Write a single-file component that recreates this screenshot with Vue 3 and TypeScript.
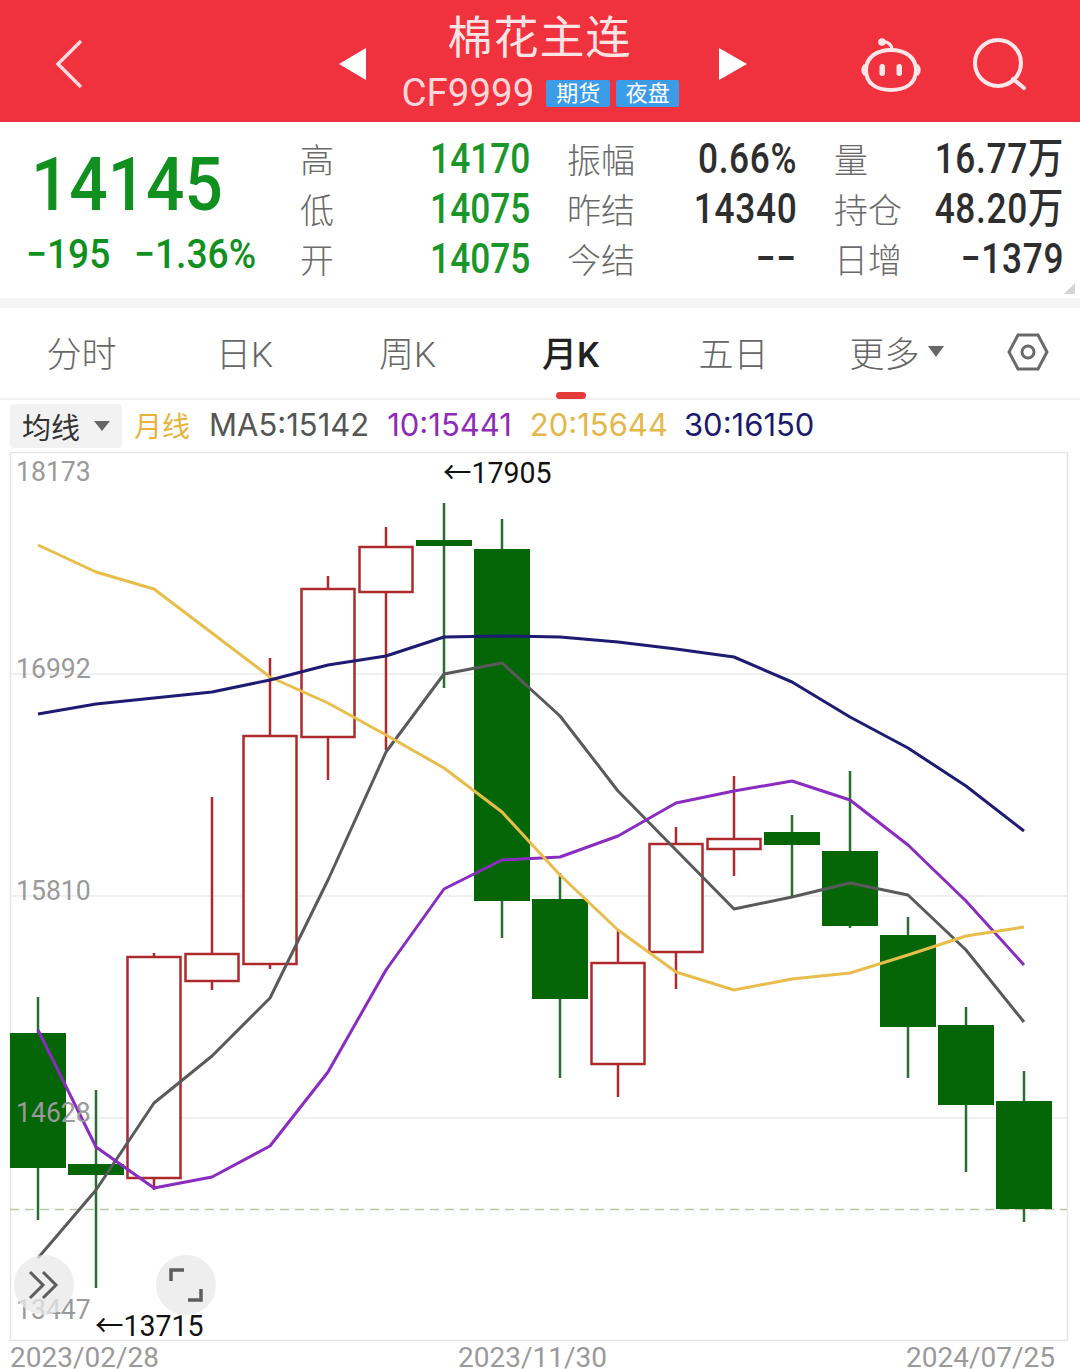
<script setup lang="ts">
interface Candle {
  top: number;
  bottom: number;
  open: number;
  close: number;
  up: boolean;
}

// one entry per month, in chart pixels, x runs in steps of 58
const candles: Candle[] = [
  { top: 997, bottom: 1220, open: 1033, close: 1168, up: false },
  { top: 1090, bottom: 1288, open: 1164, close: 1175, up: false },
  { top: 953, bottom: 1190, open: 957, close: 1178, up: true },
  { top: 797, bottom: 990, open: 954, close: 981, up: true },
  { top: 658, bottom: 969, open: 736, close: 964, up: true },
  { top: 576, bottom: 780, open: 589, close: 737, up: true },
  { top: 527, bottom: 750, open: 547, close: 592, up: true },
  { top: 503, bottom: 688, open: 540, close: 546, up: false },
  { top: 519, bottom: 938, open: 549, close: 901, up: false },
  { top: 873, bottom: 1078, open: 899, close: 999, up: false },
  { top: 930, bottom: 1097, open: 963, close: 1064, up: true },
  { top: 827, bottom: 989, open: 844, close: 952, up: true },
  { top: 776, bottom: 876, open: 839, close: 849, up: true },
  { top: 815, bottom: 896, open: 832, close: 845, up: false },
  { top: 771, bottom: 928, open: 851, close: 926, up: false },
  { top: 917, bottom: 1078, open: 935, close: 1027, up: false },
  { top: 1007, bottom: 1172, open: 1025, close: 1105, up: false },
  { top: 1071, bottom: 1222, open: 1101, close: 1209, up: false },
];

const centerX = (i: number) => 38 + i * 58;

const series = (ys: number[]) => ys.map((y, i) => `${centerX(i)},${y}`).join(" ");

const maLines = [
  {
    color: "#5a5a5a",
    points: series([1258, 1190, 1103, 1056, 998, 880, 752, 674, 663, 716, 791, 850, 909, 897, 883, 895, 950, 1022]),
  },
  {
    color: "#8a2cc0",
    points: series([1030, 1147, 1188, 1177, 1146, 1072, 970, 889, 860, 857, 836, 803, 791, 781, 800, 845, 901, 965]),
  },
  {
    color: "#e9bd4c",
    points: series([545, 572, 589, 633, 677, 703, 735, 768, 812, 875, 930, 972, 990, 979, 973, 955, 936, 927]),
  },
  {
    color: "#1d1b72",
    points: series([714, 704, 698, 692, 680, 665, 656, 637, 636, 637, 642, 649, 657, 682, 717, 748, 786, 831]),
  },
];

const quotes = [
  { label: "高", value: "14170", tone: "green" },
  { label: "振幅", value: "0.66%", tone: "dark" },
  { label: "量", value: "16.77万", tone: "dark" },
  { label: "低", value: "14075", tone: "green" },
  { label: "昨结", value: "14340", tone: "dark" },
  { label: "持仓", value: "48.20万", tone: "dark" },
  { label: "开", value: "14075", tone: "green" },
  { label: "今结", value: "−−", tone: "dark" },
  { label: "日增", value: "−1379", tone: "dark" },
];

const tabs = ["分时", "日K", "周K", "月K", "五日"];

const axisLabels = [
  { text: "18173", y: 4 },
  { text: "16992", y: 201 },
  { text: "15810", y: 423 },
  { text: "14628", y: 645 },
  { text: "13447", y: 842 },
];
</script>

<template>
  <div class="page">
    <header class="topbar">
      <div class="topbar-left">
        <svg width="30" height="52" viewBox="0 0 30 52">
          <path d="M26 3 3 26l23 23" fill="none" stroke="#ffd9dc" stroke-width="3.5" />
        </svg>
      </div>
      <div class="topbar-center">
        <span class="arrow arrow-prev"></span>
        <div class="title-block">
          <div class="title">棉花主连</div>
          <div class="subtitle">
            <span class="code">CF9999</span>
            <span class="tag">期货</span>
            <span class="tag">夜盘</span>
          </div>
        </div>
        <span class="arrow arrow-next"></span>
      </div>
      <div class="topbar-right">
        <svg width="60" height="56" viewBox="0 0 60 56" fill="none" stroke="#ffe6e8" stroke-width="4">
          <path d="M5 32c0-13 11-20 25-20s25 7 25 20c0 14-11 20-25 20S5 46 5 32Z" />
          <path d="M4 27c-3 3-3 7 0 10M56 27c3 3 3 7 0 10" stroke-width="3" />
          <path d="M21 4c6-1 10 3 10 8" stroke-width="3" />
          <circle cx="21" cy="4" r="3.8" fill="#ffe6e8" stroke="none" />
          <rect x="18.5" y="26" width="5.5" height="12" rx="2.7" fill="#ffe6e8" stroke="none" />
          <rect x="35.5" y="26" width="5.5" height="12" rx="2.7" fill="#ffe6e8" stroke="none" />
        </svg>
        <svg width="54" height="56" viewBox="0 0 54 56" fill="none" stroke="#ffe6e8" stroke-width="4">
          <circle cx="26" cy="25" r="23" />
          <path d="m41 41 11 9" stroke-linecap="round" />
        </svg>
      </div>
    </header>

    <section class="quote">
      <div class="price-block">
        <div class="price"><span>14145</span></div>
        <div class="change"><span>−195</span><span>−1.36%</span></div>
      </div>
      <div class="quote-grid">
        <div v-for="q in quotes" :key="q.label" class="quote-cell">
          <span class="quote-label">{{ q.label }}</span>
          <span class="quote-value" :class="q.tone">{{ q.value }}</span>
        </div>
      </div>
      <span class="corner"></span>
    </section>

    <nav class="tabs">
      <div v-for="tab in tabs" :key="tab" class="tab" :class="{ active: tab === '月K' }">{{ tab }}</div>
      <div class="tab">更多<span class="more-caret"></span></div>
      <div class="tab">
        <svg class="hex" width="42" height="38" viewBox="0 0 42 38" fill="none" stroke="#6a6a6a" stroke-width="3">
          <path d="M11 2h20l9 17-9 17H11L2 19Z" />
          <circle cx="21" cy="19" r="6" />
        </svg>
      </div>
    </nav>

    <div class="ma-row">
      <div class="ma-select">均线<span class="ma-caret"></span></div>
      <span class="ma-period">月线</span>
      <span class="ma-gray">MA5:15142</span>
      <span class="ma-purple">10:15441</span>
      <span class="ma-yellow">20:15644</span>
      <span class="ma-navy">30:16150</span>
    </div>

    <div class="chart">
      <svg class="chart-svg" width="1080" height="889" viewBox="0 452 1080 889">
        <rect x="10.5" y="452.5" width="1057" height="888" fill="none" stroke="#e6e6e6" stroke-width="1.5" />
        <path d="M10 674h1057M10 896h1057M10 1118h1057" stroke="#ececec" stroke-width="1.5" />
        <path d="M10 1209.5h1057" stroke="#b9c9a8" stroke-width="1.5" stroke-dasharray="9 6" />
        <g v-for="(c, i) in candles" :key="i">
          <line
            :x1="centerX(i)"
            :x2="centerX(i)"
            :y1="c.top"
            :y2="c.bottom"
            :stroke="c.up ? '#ac2a2c' : '#24702c'"
            stroke-width="2.5"
          />
          <rect
            v-if="c.up"
            :x="centerX(i) - 26.5"
            :y="c.open"
            width="53"
            :height="c.close - c.open"
            fill="#fff"
            stroke="#ac2a2c"
            stroke-width="2.5"
          />
          <rect
            v-else
            :x="centerX(i) - 28"
            :y="c.open"
            width="56"
            :height="c.close - c.open"
            fill="#056607"
          />
        </g>
        <polyline
          v-for="line in maLines"
          :key="line.color"
          :points="line.points"
          fill="none"
          :stroke="line.color"
          stroke-width="3"
          stroke-linejoin="round"
        />
      </svg>
      <span v-for="a in axisLabels" :key="a.text" class="axis-label" :style="{ top: a.y + 'px' }">{{ a.text }}</span>
      <span class="extreme extreme-high">←17905</span>
      <span class="extreme extreme-low">←13715</span>
      <div class="round-btn round-btn-left">
        <svg width="32" height="30" viewBox="0 0 32 30" fill="none" stroke="#5d5d5d" stroke-width="3">
          <path d="m2 2 13 13L2 28M15 2l13 13-13 13" />
        </svg>
      </div>
      <div class="round-btn round-btn-right">
        <svg width="34" height="34" viewBox="0 0 34 34" fill="none" stroke="#5d5d5d" stroke-width="3.5">
          <path d="M2 13V2h13M32 21v11H19" />
        </svg>
      </div>
    </div>

    <footer class="dates">
      <span>2023/02/28</span>
      <span>2023/11/30</span>
      <span>2024/07/25</span>
    </footer>
  </div>
</template>

<style scoped>
.page {
  width: 1080px;
  height: 1369px;
  overflow: hidden;
  background: #fff;
  font-family: Roboto, "Noto Sans CJK SC", sans-serif;
}

.topbar {
  height: 122px;
  background: #ef323d;
  display: grid;
  grid-template-columns: 1fr auto 1fr;
  align-items: center;
}
.topbar-left {
  padding: 6px 0 0 55px;
  display: flex;
}
.topbar-right {
  align-self: start;
  display: flex;
  justify-content: flex-end;
  gap: 51px;
  padding: 38px 54px 0 0;
}
.topbar-center {
  display: flex;
  align-items: center;
  gap: 34px;
}
.arrow {
  width: 0;
  height: 0;
  border-top: 16px solid transparent;
  border-bottom: 16px solid transparent;
  margin-top: 6px;
}
.arrow-prev {
  border-right: 27px solid #fff;
  margin-left: 5px;
}
.arrow-next {
  border-left: 28px solid #fff;
  margin-left: 5px;
}
.title-block {
  width: 280px;
  text-align: center;
}
.title {
  font-size: 45px;
  line-height: 54px;
  color: #ffe3e5;
  margin-top: 5px;
  letter-spacing: 1px;
}
.subtitle {
  display: flex;
  align-items: center;
  gap: 6px;
  height: 46px;
  margin-top: 4px;
}
.code {
  font-size: 38.5px;
  color: #ffd6d9;
  margin-right: 6px;
  margin-left: 2px;
}
.tag {
  width: 65px;
  height: 27px;
  line-height: 27px;
  font-size: 22px;
  color: #fff;
  background: #3d9ce8;
  text-align: center;
  border-radius: 2px;
  margin-top: 2px;
}

.quote {
  position: relative;
  height: 176px;
  display: flex;
  border-bottom: 10px solid #f5f5f5;
}
.price-block {
  width: 300px;
  flex: none;
}
.price {
  font-size: 75px;
  font-weight: 500;
  line-height: 80px;
  color: #10901e;
  margin-top: 22px;
  padding-left: 31px;
}
.price span {
  display: inline-block;
  transform: scaleX(0.9);
  transform-origin: left;
}
.change {
  display: flex;
  gap: 26px;
  margin-top: 9px;
  padding-left: 26px;
  font-size: 40px;
  font-weight: 500;
  line-height: 44px;
  color: #10901e;
}
.change span {
  display: inline-block;
  width: 82px;
  transform: scaleX(0.93);
  transform-origin: left;
  white-space: nowrap;
}
.quote-grid {
  flex: 1;
  padding: 11px 17px 0 0;
  display: grid;
  grid-template-columns: repeat(3, 230px);
  grid-auto-rows: 50px;
  column-gap: 37px;
}
.quote-cell {
  display: flex;
  justify-content: space-between;
  align-items: center;
}
.quote-label {
  font-size: 34px;
  color: #6a6a6a;
  font-weight: 300;
}
.quote-value {
  font-size: 42px;
  line-height: 50px;
  margin-top: 2px;
  font-weight: 500;
  transform: scaleX(0.84);
  transform-origin: right;
  white-space: nowrap;
}
.green {
  color: #1a962a;
}
.dark {
  color: #2e2e2e;
  letter-spacing: 0.8px;
}
.corner {
  position: absolute;
  right: 5px;
  bottom: 4px;
  width: 0;
  height: 0;
  border-left: 11px solid transparent;
  border-bottom: 11px solid #d4d4d4;
}

.tabs {
  height: 90px;
  display: grid;
  grid-template-columns: repeat(6, 163px) 1fr;
  border-bottom: 2px solid #f0f0f0;
}
.tab {
  position: relative;
  display: flex;
  align-items: center;
  justify-content: center;
  padding-bottom: 3px;
  font-size: 35px;
  font-weight: 300;
  color: #666;
}
.tab.active {
  color: #222;
  font-weight: 500;
}
.tab.active::after {
  content: "";
  position: absolute;
  left: 67px;
  bottom: -1px;
  width: 30px;
  height: 7px;
  border-radius: 4px;
  background: #e53a3a;
}
.more-caret {
  width: 0;
  height: 0;
  margin-left: 8px;
  border-left: 8px solid transparent;
  border-right: 8px solid transparent;
  border-top: 11px solid #666;
}
.hex {
  margin-right: 2px;
}

.ma-row {
  height: 52px;
  display: flex;
  align-items: center;
  padding-left: 10px;
  font-family: Inter, "Noto Sans CJK SC", sans-serif;
  font-size: 31px;
  white-space: nowrap;
}
.ma-row > span {
  margin-bottom: 3px;
}
.ma-select {
  width: 112px;
  height: 44px;
  background: #f2f2f2;
  border-radius: 4px;
  display: flex;
  align-items: center;
  padding-left: 12px;
  box-sizing: border-box;
  font-size: 29px;
  color: #333;
  margin-right: 12px;
}
.ma-caret {
  width: 0;
  height: 0;
  margin-left: 14px;
  border-left: 8px solid transparent;
  border-right: 8px solid transparent;
  border-top: 10px solid #666;
}
.ma-period {
  color: #e8b23c;
  font-size: 28px;
  margin-right: 19px;
}
.ma-gray {
  color: #555;
  margin-right: 18px;
}
.ma-purple {
  color: #8e2bb8;
  margin-right: 18px;
}
.ma-yellow {
  color: #e3b84a;
  margin-right: 16px;
}
.ma-navy {
  color: #1c1a6e;
}

.chart {
  position: relative;
  height: 889px;
}
.chart-svg {
  display: block;
}
.axis-label {
  position: absolute;
  left: 16px;
  font-size: 28px;
  line-height: 32px;
  color: #9a9a9a;
  transform: scaleX(0.95);
  transform-origin: left;
}
.extreme {
  position: absolute;
  font-size: 30px;
  line-height: 34px;
  color: #111;
  transform: scaleX(0.95);
  transform-origin: left;
}
.extreme-high {
  left: 443px;
  top: 4px;
}
.extreme-low {
  left: 95px;
  top: 857px;
}
.round-btn {
  position: absolute;
  top: 803px;
  width: 60px;
  height: 60px;
  border-radius: 50%;
  background: rgba(232, 232, 232, 0.75);
  display: flex;
  align-items: center;
  justify-content: center;
}
.round-btn-left {
  left: 14px;
}
.round-btn-right {
  left: 156px;
}

.dates {
  display: flex;
  justify-content: space-between;
  padding: 6px 25px 0 10px;
  font-size: 28px;
  line-height: 22px;
  color: #9a9a9a;
}
</style>

<style>
body {
  margin: 0;
}
</style>
